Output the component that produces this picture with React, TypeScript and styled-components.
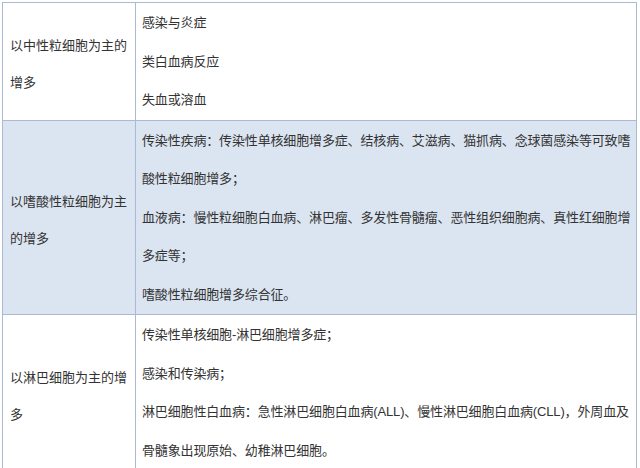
import styled, { createGlobalStyle } from 'styled-components'

const GlobalStyle = createGlobalStyle`
  html, body {
    margin: 0;
    padding: 0;
    background: #ffffff;
  }
  body {
    font-family: "Liberation Sans", "Noto Sans CJK SC", sans-serif;
    color: #333333;
  }
`

const Page = styled.div`
  padding: 2px 0 0 2px;
  width: 640px;
  height: 468px;
  overflow: hidden;
  box-sizing: border-box;
`

const Table = styled.table`
  width: 635px;
  border-collapse: collapse;
  table-layout: fixed;
  font-size: 13px;
`

const Row = styled.tr<{ $shaded?: boolean }>`
  background: ${p => (p.$shaded ? '#dbe5f1' : '#ffffff')};
`

const LabelCell = styled.td`
  width: 133px;
  border: 1px solid #a9bad3;
  padding: 6px 7px 0 7px;
  vertical-align: middle;
  line-height: 37px;
  box-sizing: border-box;
`

const ContentCell = styled.td`
  border: 1px solid #a9bad3;
  padding: 1px 2px 0 6px;
  vertical-align: top;
  line-height: 38.5px;
  letter-spacing: -0.15px;
`

const Para = styled.p`
  margin: 0;
`

const rows = [
  {
    label: '以中性粒细胞为主的增多',
    items: ['感染与炎症', '类白血病反应', '失血或溶血'],
  },
  {
    label: '以嗜酸性粒细胞为主的增多',
    shaded: true,
    items: [
      '传染性疾病：传染性单核细胞增多症、结核病、艾滋病、猫抓病、念球菌感染等可致嗜酸性粒细胞增多；',
      '血液病：慢性粒细胞白血病、淋巴瘤、多发性骨髓瘤、恶性组织细胞病、真性红细胞增多症等；',
      '嗜酸性粒细胞增多综合征。',
    ],
  },
  {
    label: '以淋巴细胞为主的增多',
    items: [
      '传染性单核细胞-淋巴细胞增多症；',
      '感染和传染病；',
      '淋巴细胞性白血病：急性淋巴细胞白血病(ALL)、慢性淋巴细胞白血病(CLL)，外周血及骨髓象出现原始、幼稚淋巴细胞。',
    ],
  },
]

export default function App() {
  return (
    <>
      <GlobalStyle />
      <Page>
        <Table>
          <tbody>
            {rows.map(r => (
              <Row key={r.label} $shaded={r.shaded}>
                <LabelCell>{r.label}</LabelCell>
                <ContentCell>
                  {r.items.map(t => (
                    <Para key={t}>{t}</Para>
                  ))}
                </ContentCell>
              </Row>
            ))}
          </tbody>
        </Table>
      </Page>
    </>
  )
}
